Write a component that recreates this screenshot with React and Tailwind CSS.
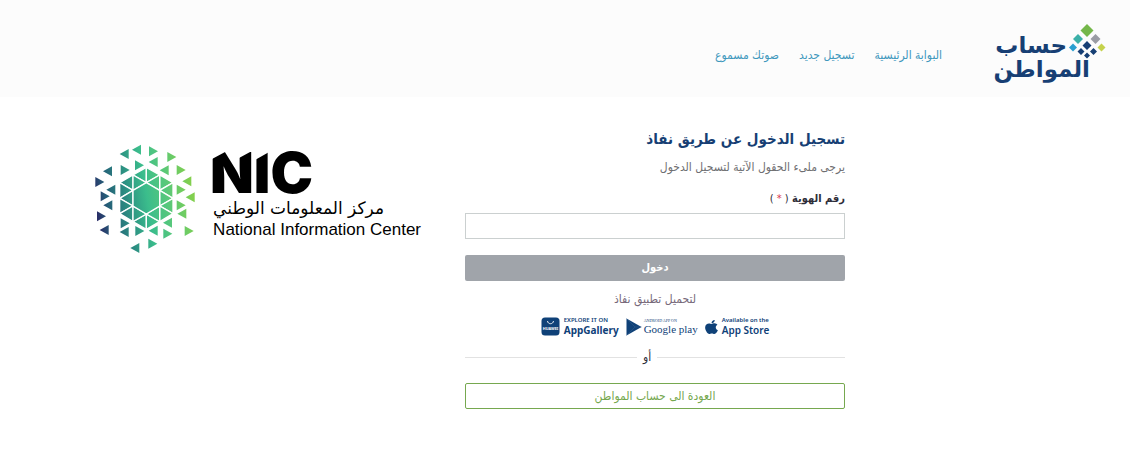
const SCATTER = [
  [115, 58, 'l'], [152, 45, 'l'], [202, 50, 'r'], [257, 67, 'r'],
  [65, 110, 'l'], [117, 106, 'r'], [160, 92, 'r'], [202, 82, 'l'], [235, 107, 'l'], [285, 106, 'r'],
  [41, 142, 'r'], [75, 165, 'l'], [303, 140, 'l'], [285, 165, 'r'], [57, 185, 'r'], [66, 212, 'l'],
  [313, 188, 'l'], [46, 245, 'r'], [55, 286, 'l'], [117, 266, 'r'], [115, 292, 'l'], [161, 289, 'r'],
  [202, 288, 'l'], [245, 264, 'l'], [245, 297, 'r'], [285, 212, 'r'], [288, 237, 'l'], [309, 289, 'r'],
  [147, 340, 'l'], [200, 327, 'r'],
];

const RING = [
  '101,144 141,121 141,167', '101,144 101,191 141,167', '101,191 141,167 141,214',
  '101,191 101,237 141,214', '101,237 141,214 141,261',
  '141,121 181,98 181,144', '141,121 141,167 181,144',
  '141,261 181,238 181,284', '141,261 141,214 181,238',
];

function NicEmblem() {
  return (
    <svg viewBox="27 28 303 330" className="h-[110px] w-[101px] shrink-0" aria-hidden="true">
      <defs>
        <linearGradient id="nic" gradientUnits="userSpaceOnUse" x1="30" y1="215" x2="325" y2="165">
          <stop offset="0" stopColor="#2a2f68" />
          <stop offset="0.12" stopColor="#255f78" />
          <stop offset="0.32" stopColor="#2c8f82" />
          <stop offset="0.52" stopColor="#3bbd8c" />
          <stop offset="0.72" stopColor="#58c87b" />
          <stop offset="1" stopColor="#86d04a" />
        </linearGradient>
      </defs>
      <g fill="url(#nic)">
        {SCATTER.map(([x, y, d]) => (
          <polygon
            key={`${x}-${y}`}
            points={d === 'l'
              ? `${x - 14},${y} ${x + 13},${y - 15} ${x + 13},${y + 15}`
              : `${x + 14},${y} ${x - 13},${y - 15} ${x - 13},${y + 15}`}
          />
        ))}
        <g stroke="#fff" strokeWidth="4">
          {RING.map((p) => <polygon key={p} points={p} />)}
          {RING.map((p) => (
            <polygon
              key={`m${p}`}
              points={p.split(' ').map((c) => {
                const [x, y] = c.split(',').map(Number);
                return `${362 - x},${y}`;
              }).join(' ')}
            />
          ))}
          <polygon points="181,144 221,167 221,214 181,238 141,214 141,167" />
        </g>
      </g>
    </svg>
  );
}

function NicWordmark() {
  return (
    <svg viewBox="0 0 106 46" className="h-[46px] w-[106px] overflow-visible" role="img" aria-label="NIC">
      <text x="-3" y="43" fontSize="57" fontWeight="900" fontFamily="Inter, sans-serif" fill="#000">NIC</text>
      <path d="M-1 0h14v1.500L-1 9zM26 0h12v1.500L26 8zM42 0h15v1.500L42 10z" fill="#fff" />
    </svg>
  );
}

function BrandMark() {
  return (
    <svg viewBox="0 0 114 60" className="h-[60px] w-[114px]" role="img" aria-label="حساب المواطن">
      <g fill="#173f74" fontFamily="'DejaVu Sans', sans-serif" fontWeight="700" direction="rtl">
        <text x="75" y="29" fontSize="23">حساب</text>
        <text x="98" y="53" fontSize="23">المواطن</text>
      </g>
      <path d="M95 0l6.500 6.500-6.500 6.500-6.500-6.500z" fill="#74b74a" />
      <path d="M86 10l5 5-5 5-5-5z" fill="#3bb0a8" />
      <path d="M103.500 10l5 5-5 5-5-5z" fill="#9a9ca4" />
      <path d="M81 19.500l4 4-4 4-4-4z" fill="#2a9fd0" />
      <path d="M109.500 19.500l4 4-4 4-4-4z" fill="#c5d24c" />
      <path d="M95 17l4.500 4.500-4.500 4.500-4.500-4.500zM89 24l3.500 3.500-3.500 3.500-3.500-3.500zM101.500 24l3.500 3.500-3.500 3.500-3.500-3.500zM95 28.500l3 3-3 3-3-3z" fill="#173f74" />
    </svg>
  );
}

const NAV = ['البوابة الرئيسية', 'تسجيل جديد', 'صوتك مسموع'];

export default function App() {
  return (
    <div dir="rtl" className="bg-white font-['DejaVu_Sans_Condensed','DejaVu_Sans',sans-serif] text-[#6f6f72]">
      <header className="flex items-start bg-[#fcfcfc] ps-6 pt-6 pb-[13px]">
        <a href="#home"><BrandMark /></a>
        <nav className="ms-[50px] flex gap-5 pt-[21px] text-xs leading-5 text-[#3f98bd]">
          {NAV.map((n) => <a key={n} href="#nav" className="whitespace-nowrap">{n}</a>)}
        </nav>
      </header>

      <main className="flex items-start gap-11 ps-[285px] pt-[30px]">
        <form className="flex w-full max-w-[380px] shrink-0 flex-col" onSubmit={(e) => e.preventDefault()}>
          <h1 className="text-[15px] leading-6 font-bold whitespace-nowrap text-[#173f74]">تسجيل الدخول عن طريق نفاذ</h1>
          <p className="mt-2 text-xs leading-4">يرجى ملىء الحقول الآتية لتسجيل الدخول</p>
          <label htmlFor="national-id" className="mt-4 text-[11px] leading-4 font-bold text-[#2d2d38]">
            رقم الهوية <span className="font-normal">( <span className="text-[#d9364c]">*</span> )</span>
          </label>
          <input id="national-id" type="text" className="mt-[6px] h-[26px] w-full border border-[#cbd0d0] bg-white px-2 text-xs" />
          <button type="submit" className="mt-4 h-[26px] rounded-xs bg-[#a0a4aa] text-[11px] font-bold text-white">دخول</button>
          <p className="mt-2 text-center text-xs leading-5 text-[#77697a]">لتحميل تطبيق نفاذ</p>

          <div dir="ltr" className="mt-2 flex items-center justify-center gap-[7px] font-['Noto_Sans',sans-serif] text-[#0f4178]">
            <a href="#appgallery" className="flex items-center gap-1">
              <svg viewBox="0 0 19 19" className="size-[19px]" aria-hidden="true">
                <rect x="0.5" y="0.5" width="18" height="18" rx="3.5" fill="currentColor" />
                <path d="M6.5 4c.3 3.600 5.700 3.600 6 0" fill="none" stroke="#fff" strokeWidth="0.9" />
                <text x="9.500" y="12.500" textAnchor="middle" fontSize="3.800" fontWeight="700" fill="#fff">HUAWEI</text>
              </svg>
              <span className="flex flex-col whitespace-nowrap">
                <span className="text-[6px] leading-[7px] font-semibold">EXPLORE IT ON</span>
                <span className="text-[10px] leading-3 font-bold">AppGallery</span>
              </span>
            </a>
            <a href="#googleplay" className="flex items-center gap-[2px]">
              <svg viewBox="0 0 16 18" className="h-[18px] w-4" aria-hidden="true">
                <path d="M0.500 0.500v17L15.500 9z" fill="currentColor" />
                <path d="M0.500 0.500L9 9l-8.500 8.500M9 9h6.500" fill="none" stroke="#3d6794" strokeWidth="0.400" />
              </svg>
              <span className="flex flex-col font-['Liberation_Serif',serif] whitespace-nowrap">
                <span className="text-[4px] leading-[5px]">ANDROID APP ON</span>
                <span className="text-[11px] leading-3">Google play</span>
              </span>
            </a>
            <a href="#appstore" className="flex items-center gap-1">
              <svg viewBox="0 0 384 512" className="h-4 w-[13px]" preserveAspectRatio="none" aria-hidden="true">
                <path fill="currentColor" d="M318.700 268.700c-.2-36.700 16.400-64.400 50-84.800-18.800-26.900-47.200-41.700-84.700-44.600-35.500-2.800-74.300 20.700-88.500 20.700-15 0-49.400-19.700-76.400-19.700C63.300 141.200 4 184.800 4 273.500q0 39.300 14.400 81.200c12.800 36.700 59 126.700 107.200 125.200 25.200-.6 43-17.900 75.800-17.900 31.800 0 48.300 17.900 76.400 17.900 48.600-.7 90.400-82.500 102.600-119.300-65.200-30.700-61.700-90-61.700-91.900zm-56.600-164.200c27.300-32.400 24.800-61.900 24-72.500-24.100 1.400-52 16.400-67.900 34.900-17.500 19.800-27.800 44.300-25.600 71.900 26.100 2 49.900-11.400 69.500-34.300z" />
              </svg>
              <span className="flex flex-col whitespace-nowrap">
                <span className="text-[6px] leading-[7px] font-semibold">Available on the</span>
                <span className="text-[10px] leading-3 font-semibold">App Store</span>
              </span>
            </a>
          </div>

          <div className="mt-[11px] flex items-center gap-[6px] text-xs leading-5 text-[#2d2d38]">
            <span className="h-px grow-[12] bg-[#e2e2e2]" />
            <span>أو</span>
            <span className="h-px grow-[11] bg-[#e2e2e2]" />
          </div>
          <button type="button" className="mt-4 h-[26px] rounded-xs border border-[#76a84f] text-xs text-[#76a84f]">العودة الى حساب المواطن</button>
        </form>

        <div dir="ltr" className="flex shrink-0 items-start gap-[17px] pt-[17px] text-black">
          <NicEmblem />
          <div className="flex flex-col pt-[6px] whitespace-nowrap">
            <NicWordmark />
            <span dir="rtl" lang="ar" className="self-start font-['DejaVu_Sans',sans-serif] text-[17px] leading-6">مركز المعلومات الوطني</span>
            <span className="font-['Liberation_Sans',sans-serif] text-[17px] leading-5">National Information Center</span>
          </div>
        </div>
      </main>
    </div>
  );
}
